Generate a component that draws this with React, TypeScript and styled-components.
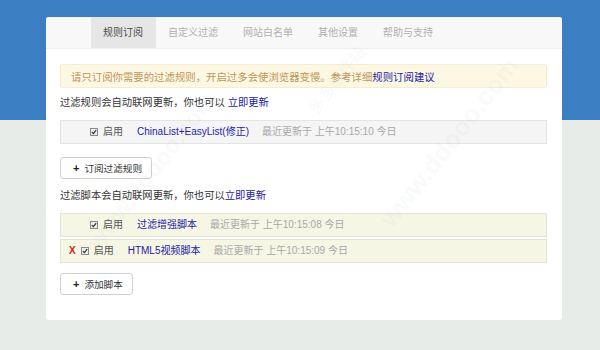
import React from 'react'
import styled, { createGlobalStyle } from 'styled-components'

const GlobalStyle = createGlobalStyle`
  html, body {
    margin: 0;
    padding: 0;
  }
  body {
    width: 600px;
    height: 350px;
    overflow: hidden;
    background: linear-gradient(to bottom, #3b7ec2 0, #3b7ec2 120px, #e8ece9 120px);
    font-family: "Liberation Sans", "Noto Sans CJK SC", sans-serif;
  }
`

const Page = styled.div`
  padding: 17px 0 0 46px;
`

const Card = styled.div`
  position: relative;
  width: 516px;
  height: 303px;
  background: #fff;
  border-radius: 3px;
  overflow: hidden;
`

const TabBar = styled.ul`
  display: flex;
  margin: 0;
  padding: 0 0 0 45px;
  list-style: none;
  height: 32px;
  box-sizing: border-box;
  background: #f8f8f8;
  border-bottom: 1px solid #efefef;
`

const Tab = styled.li<{ $active?: boolean }>`
  padding: 0 13px 0 12px;
  line-height: 31px;
  font-size: 10px;
  color: ${({ $active }) => ($active ? '#4a4a4a' : '#b0b0b0')};
  background: ${({ $active }) => ($active ? '#e6e6e6' : 'transparent')};
`

const Body = styled.div`
  display: flex;
  flex-direction: column;
  padding: 15px 15px 0 14px;
`

const Alert = styled.div`
  display: flex;
  align-items: center;
  height: 24px;
  box-sizing: border-box;
  padding: 0 10px;
  background: #fcf8e3;
  border: 1px solid #f8ecd0;
  border-radius: 2px;
  color: #c0955a;
  font-size: 10.4px;
`

const Link = styled.a`
  color: #2020a6;
  text-decoration: none;
`

const Text = styled.div<{ $top: number }>`
  margin-top: ${({ $top }) => $top}px;
  line-height: 16px;
  font-size: 10.3px;
  color: #333;
`

const Row = styled.div<{ $tint: 'gray' | 'beige'; $indent: number; $top: number }>`
  display: flex;
  align-items: center;
  height: 24px;
  box-sizing: border-box;
  margin-top: ${({ $top }) => $top}px;
  padding-left: ${({ $indent }) => $indent}px;
  background: ${({ $tint }) => ($tint === 'gray' ? '#f5f5f5' : '#f6f6e5')};
  border: 1px solid ${({ $tint }) => ($tint === 'gray' ? '#e4e4e4' : '#e3e3d3')};
  font-size: 10px;
  line-height: 16px;
  color: #555;
`

const Remove = styled.span`
  margin-right: 5px;
  color: #e01818;
  font-weight: bold;
  font-size: 10px;
`

const Check = styled.span`
  display: inline-flex;
  align-items: center;
  justify-content: center;
  width: 8px;
  height: 8px;
  box-sizing: border-box;
  border: 1px solid #8a8a8a;
  background: #ececec;
  margin-right: 5px;
`

const Name = styled.a`
  margin-left: 14px;
  color: #1c1caa;
  text-decoration: none;
`

const Meta = styled.span`
  margin-left: 13px;
  color: #a8a8a8;
`

const Button = styled.button<{ $top: number }>`
  align-self: flex-start;
  display: inline-flex;
  align-items: center;
  height: 22px;
  margin-top: ${({ $top }) => $top}px;
  padding: 0 9px 0 12px;
  background: #fff;
  border: 1px solid #cfcfcf;
  border-radius: 3px;
  font-family: inherit;
  font-size: 9.6px;
  color: #333;
`

const Plus = styled.span`
  margin-right: 5px;
  font-weight: bold;
  font-size: 11px;
  color: #222;
`

const Watermark = styled.span<{ $x: number; $y: number; $size: number }>`
  position: absolute;
  left: ${({ $x }) => $x}px;
  top: ${({ $y }) => $y}px;
  font-size: ${({ $size }) => $size}px;
  font-weight: bold;
  color: rgba(90, 110, 140, 0.05);
  transform: rotate(-52deg);
  white-space: nowrap;
  pointer-events: none;
`

const CheckBox = () => (
  <Check>
    <svg width="6" height="6" viewBox="0 0 6 6">
      <path d="M0.8 3.1 L2.4 4.6 L5.2 1.2" fill="none" stroke="#333" strokeWidth="1.2" />
    </svg>
  </Check>
)

type Item = { name: string; time: string; removable?: boolean }

const rules: Item[] = [{ name: 'ChinaList+EasyList(修正)', time: '最近更新于 上午10:15:10 今日' }]

const scripts: Item[] = [
  { name: '过滤增强脚本', time: '最近更新于 上午10:15:08 今日' },
  { name: 'HTML5视频脚本', time: '最近更新于 上午10:15:09 今日', removable: true },
]

const tabs = ['规则订阅', '自定义过滤', '网站白名单', '其他设置', '帮助与支持']

const ItemRow = ({ item, tint, top }: { item: Item; tint: 'gray' | 'beige'; top: number }) => (
  <Row $tint={tint} $indent={item.removable ? 8 : 29} $top={top}>
    {item.removable && <Remove>X</Remove>}
    <CheckBox />
    <span>启用</span>
    <Name href="#">{item.name}</Name>
    <Meta>{item.time}</Meta>
  </Row>
)

export default function App() {
  return (
    <Page>
      <GlobalStyle />
      <Card>
        <TabBar>
          {tabs.map((t, i) => (
            <Tab key={t} $active={i === 0}>
              {t}
            </Tab>
          ))}
        </TabBar>
        <Body>
          <Alert>
            请只订阅你需要的过滤规则，开启过多会使浏览器变慢。参考详细<Link href="#">规则订阅建议</Link>
          </Alert>
          <Text $top={7}>
            过滤规则会自动联网更新，你也可以 <Link href="#">立即更新</Link>
          </Text>
          {rules.map((r) => (
            <ItemRow key={r.name} item={r} tint="gray" top={9} />
          ))}
          <Button $top={13}>
            <Plus>+</Plus>订阅过滤规则
          </Button>
          <Text $top={9}>
            过滤脚本会自动联网更新，你也可以<Link href="#">立即更新</Link>
          </Text>
          {scripts.map((s, i) => (
            <ItemRow key={s.name} item={s} tint="beige" top={i === 0 ? 9 : 2} />
          ))}
          <Button $top={10}>
            <Plus>+</Plus>添加脚本
          </Button>
        </Body>
        <Watermark $x={300} $y={110} $size={26}>www.ddooo.com</Watermark>
        <Watermark $x={10} $y={140} $size={24}>www.ddooo.com</Watermark>
        <Watermark $x={250} $y={50} $size={16}>多多软件站</Watermark>
      </Card>
    </Page>
  )
}
